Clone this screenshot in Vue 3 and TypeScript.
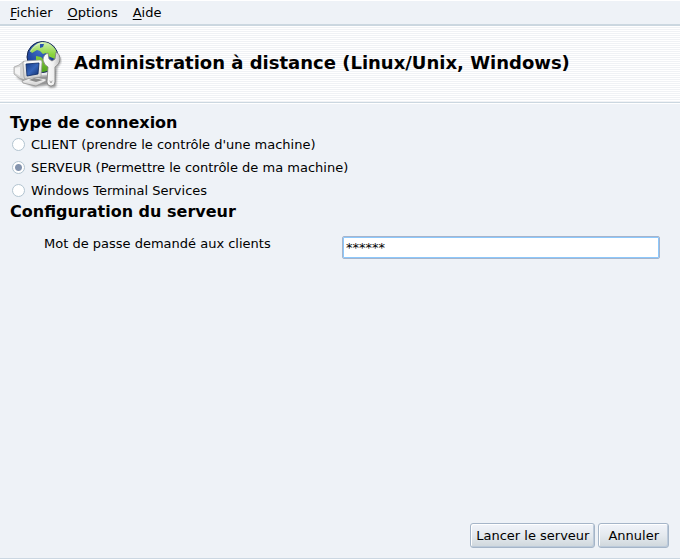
<script setup lang="ts">
import { ref } from 'vue'

type Mode = 'client' | 'server' | 'wts'

interface MenuEntry {
  key: string
  rest: string
}

const menus: MenuEntry[] = [
  { key: 'F', rest: 'ichier' },
  { key: 'O', rest: 'ptions' },
  { key: 'A', rest: 'ide' },
]

const modes: { id: Mode; label: string }[] = [
  { id: 'client', label: "CLIENT (prendre le contrôle d'une machine)" },
  { id: 'server', label: 'SERVEUR (Permettre le contrôle de ma machine)' },
  { id: 'wts', label: 'Windows Terminal Services' },
]

const mode = ref<Mode>('server')
const password = ref('******')
</script>

<template>
  <div class="window">
    <nav class="menubar">
      <button v-for="m in menus" :key="m.key" type="button" class="menu"><u>{{ m.key }}</u>{{ m.rest }}</button>
    </nav>

    <header class="banner">
      <svg class="logo" viewBox="0 0 50 50" aria-hidden="true">
        <defs>
          <radialGradient id="sea" cx="0.4" cy="0.3" r="0.8">
            <stop offset="0" stop-color="#3f6cc4" />
            <stop offset="0.5" stop-color="#2148a0" />
            <stop offset="1" stop-color="#0c2466" />
          </radialGradient>
          <linearGradient id="land" x1="0" y1="3" x2="0" y2="34" gradientUnits="userSpaceOnUse">
            <stop offset="0" stop-color="#d4f0b4" />
            <stop offset="0.4" stop-color="#8ad43c" />
            <stop offset="1" stop-color="#4fa01c" />
          </linearGradient>
          <linearGradient id="steel" x1="0" y1="0" x2="1" y2="0">
            <stop offset="0" stop-color="#ffffff" />
            <stop offset="0.6" stop-color="#f0f0f0" />
            <stop offset="1" stop-color="#c0c0c0" />
          </linearGradient>
          <linearGradient id="plastic" x1="0" y1="0" x2="0" y2="1">
            <stop offset="0" stop-color="#ffffff" />
            <stop offset="1" stop-color="#cccccc" />
          </linearGradient>
          <linearGradient id="glass" x1="0" y1="0" x2="1" y2="1">
            <stop offset="0" stop-color="#173b86" />
            <stop offset="0.5" stop-color="#3765b9" />
            <stop offset="1" stop-color="#12306f" />
          </linearGradient>
          <clipPath id="disc"><circle cx="30.5" cy="18" r="15" /></clipPath>
          <filter id="soft" x="-20%" y="-20%" width="140%" height="140%">
            <feGaussianBlur stdDeviation="0.9" />
          </filter>
        </defs>
        <g fill="#000000" opacity="0.4" filter="url(#soft)">
          <path d="M4 38 L12 43 L22 48 L36 46 L38 49 L44 48 L45 29 L49 23 L48 17 L40 36 Z" />
        </g>
        <circle cx="30.5" cy="18" r="15.5" fill="url(#sea)" stroke="#14264f" stroke-width="1" />
        <g clip-path="url(#disc)">
          <path d="M18 12 Q22 5 29 3 L36 3 Q44 7 46 15 L43 20 L36 17 L34 14 L31 15 L28 12 L25 11 L20 14 Z" fill="url(#land)" />
          <path d="M24 17 L29 18 L32 21 L38 22 L39 27 L34 34 L29 34 L28 27 L24 22 Z" fill="url(#land)" />
          <path d="M28 5 L32 5 L31 8 L28 9 Z" fill="#2a56ae" />
          <path d="M18 13 Q23 5 31 4" fill="none" stroke="#ffffff" stroke-width="1" opacity="0.4" />
        </g>
        <path d="M2 28 L7 26 L12 22 L13 41 L7 39 L2 35 Z" fill="#d6d6d6" stroke="#a0a0a0" stroke-width="0.7" />
        <path d="M3 29 L8 28 L8 37 L3 34 Z" fill="#f4f4f4" />
        <path d="M10 42 L20 38 L34 40 L34 42 L24 47 L11 44 Z" fill="url(#plastic)" stroke="#8c8c8c" stroke-width="0.7" />
        <path d="M17 41 L22 39 L31 41 L24 43 Z" fill="#8a8a8a" />
        <path d="M13 22 L28 21 Q30 21 30 23 L29 37 Q29 38 28 38 L14 40 Q12 40 12 38 L11 24 Q11 22 13 22 Z" fill="url(#plastic)" stroke="#999999" stroke-width="0.7" />
        <path d="M14 25 L27 24 L26 35 L15 37 Z" fill="url(#glass)" stroke="#0b2863" stroke-width="0.8" />
        <path d="M36 14 Q31 16 31 21 Q32 26 36 28 L35 43 Q35 47 39 47 Q43 47 43 43 L43 28 Q48 25 48 19 Q48 15 44 13 L43 20 L40 22 L37 20 Z" fill="url(#steel)" stroke="#7c7c7c" stroke-width="0.8" />
        <path d="M38 42 L39 44 L40 42" fill="none" stroke="#a8a8a8" stroke-width="1" stroke-linecap="round" />
      </svg>
      <h1 class="title">Administration à distance (Linux/Unix, Windows)</h1>
    </header>

    <main class="content">
      <h2 id="mode-heading" class="heading">Type de connexion</h2>
      <div class="modes" role="radiogroup" aria-labelledby="mode-heading">
        <label v-for="m in modes" :key="m.id" class="mode">
          <input v-model="mode" class="radio" type="radio" name="mode" :value="m.id" />
          <span>{{ m.label }}</span>
        </label>
      </div>

      <h2 class="heading">Configuration du serveur</h2>
      <div class="field">
        <label class="field-label" for="password">Mot de passe demandé aux clients</label>
        <input id="password" v-model="password" class="entry" type="text" autocomplete="off" />
      </div>
    </main>

    <footer class="actions">
      <button type="button" class="action">Lancer le serveur</button>
      <button type="button" class="action roomy">Annuler</button>
    </footer>
  </div>
</template>

<style>
body {
  background: #eef2f7;
}
</style>

<style scoped>
.window {
  box-sizing: border-box;
  display: flex;
  flex-direction: column;
  min-height: 100vh;
  border-top: 1px solid #ffffff;
  border-bottom: 1px solid #ffffff;
  box-shadow: inset 0 -1px #cbd7e2;
  background: #eef2f7;
  color: #000000;
  font: 13px/16px "DejaVu Sans", sans-serif;
}

.window button,
.window input {
  font: inherit;
  color: inherit;
}

.menubar {
  display: flex;
  gap: 15px;
  padding: 4px 10px 3px;
}

.menu {
  padding: 0;
  border: 0;
  background: none;
}

.menu u {
  text-underline-offset: 2px;
}

.banner {
  display: flex;
  align-items: center;
  gap: 12px;
  box-sizing: border-box;
  height: 79px;
  padding: 0 12px;
  border-top: 2px solid #cbd7e0;
  border-bottom: 1px solid #cbd7e0;
  background: repeating-linear-gradient(#ffffff 0 1px, #f0f2f5 1px 2px);
}

.logo {
  flex: none;
  width: 50px;
  height: 50px;
}

.title {
  margin: 0;
  font-size: 18px;
  line-height: 22px;
  padding-bottom: 2px;
}

.content {
  flex: 1;
  padding: 9px 20px 0 10px;
  border-top: 1px solid #ffffff;
}

.heading {
  margin: 0;
  font-size: 16px;
  line-height: 20px;
}

.modes {
  display: flex;
  flex-direction: column;
}

.mode {
  display: flex;
  align-items: center;
  gap: 6px;
  height: 23px;
  padding-left: 2px;
}

.radio {
  appearance: none;
  box-sizing: border-box;
  width: 13px;
  height: 13px;
  margin: 0;
  border: 1px solid #b2c4d0;
  border-radius: 50%;
  background: #ffffff;
}

.radio:checked {
  background: radial-gradient(circle, #8494ae 0 3px, #ffffff 4px);
}

.field {
  display: grid;
  grid-template-columns: 298px 1fr;
  align-items: start;
  padding: 14px 0 0 34px;
}

.field-label {
  line-height: 16px;
}

.entry {
  box-sizing: border-box;
  width: 100%;
  height: 23px;
  padding: 0 3px;
  border: 1px solid #a5b4cc;
  border-radius: 2px;
  outline: 0;
  background: #ffffff;
  box-shadow: inset 0 0 0 1px #8cc8fc;
}

.actions {
  display: flex;
  justify-content: flex-end;
  gap: 3px;
  padding: 0 11px 11px;
}

.action {
  height: 25px;
  padding: 0 5px;
  border: 1px solid #a5b5c8;
  border-radius: 3px;
  background: linear-gradient(#f1f4fa, #e4e9ee 50%, #cfd7dc);
  box-shadow: inset 1px 1px #ffffff, inset -1px -1px #bccada;
}

.roomy {
  padding: 0 9px;
}
</style>
